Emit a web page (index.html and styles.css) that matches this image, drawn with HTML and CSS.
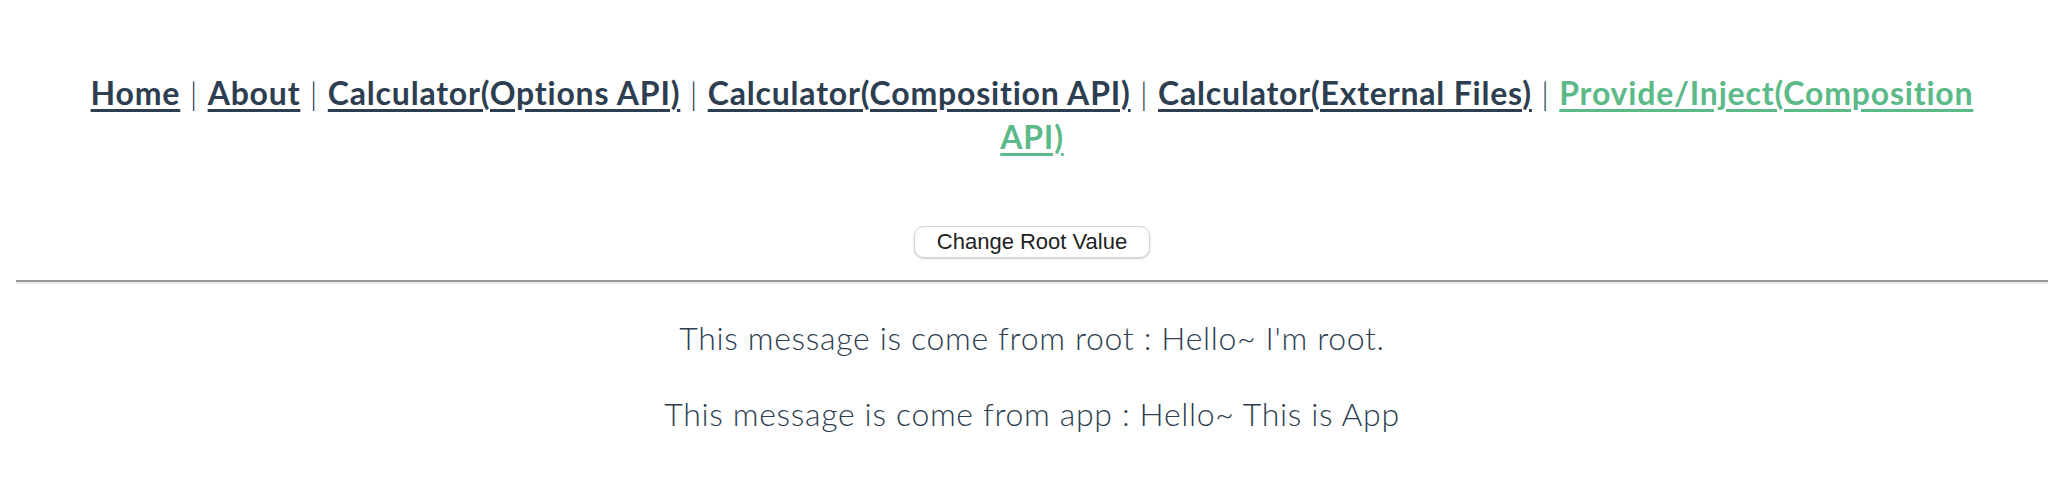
FILE: index.html
```html
<!DOCTYPE html>
<html lang="en">
<head>
<meta charset="utf-8">
<title>Provide/Inject</title>
<link rel="stylesheet" href="styles.css">
</head>
<body>
<div class="app">
  <nav class="nav">
    <a class="nav-link" href="#">Home</a> | <a class="nav-link" href="#">About</a> | <a class="nav-link" href="#">Calculator(Options API)</a> | <a class="nav-link" href="#">Calculator(Composition API)</a> | <a class="nav-link" href="#">Calculator(External Files)</a> | <a class="nav-link active" href="#">Provide/Inject(Composition API)</a>
  </nav>
  <div class="page">
    <div class="actions"><button class="btn" type="button">Change Root Value</button></div>
    <hr class="divider">
    <p class="msg">This message is come from root : Hello~ I'm root.</p>
    <p class="msg">This message is come from app : Hello~ This is App</p>
  </div>
</div>
</body>
</html>
```
FILE: styles.css
```css
html, body {
  background: #ffffff;
}
body {
  margin: 16px;
}
.app {
  font-family: Lato, "Noto Sans", sans-serif;
  font-size: 32px;
  text-align: center;
  color: #2c3e50;
}
.nav {
  padding: 55px 60px 65px;
  line-height: 44px;
  font-weight: 300;
  letter-spacing: 0.8px;
}
.nav-link {
  font-weight: 700;
  color: #2c3e50;
  text-decoration: underline;
  text-decoration-thickness: 3px;
  text-underline-offset: 4px;
}
.nav-link.active {
  color: #5cb988;
}
.page {
  font-weight: 300;
}
.actions {
  line-height: 44px;
  height: 44px;
  margin-top: -8px;
}
.btn {
  font-family: "Liberation Sans", Arial, sans-serif;
  font-size: 22px;
  color: #222222;
  background: #ffffff;
  border: 1px solid #d4d4d4;
  border-radius: 10px;
  box-shadow: 0 1px 2px rgba(0, 0, 0, 0.2);
  height: 32px;
  padding: 0 22px;
  vertical-align: middle;
}
.divider {
  margin: 20px 0 0;
  height: 0;
  border: 0;
  border-top: 2px solid #999999;
  border-bottom: 2px solid #eeeeee;
}
.msg {
  margin: 32px 0;
  line-height: 44px;
  letter-spacing: 0.65px;
}
```
